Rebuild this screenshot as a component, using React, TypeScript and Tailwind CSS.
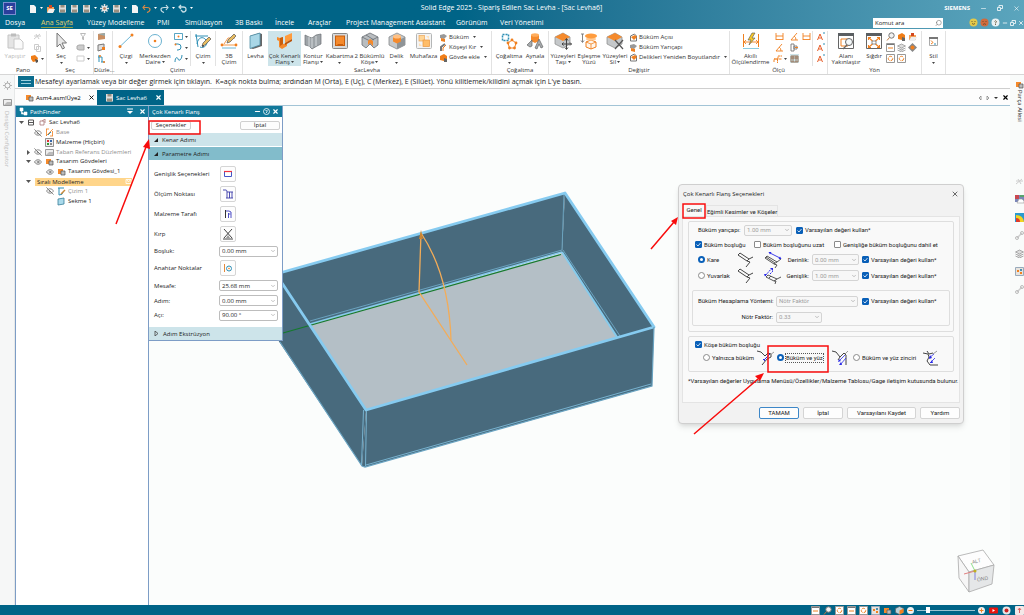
import type { ReactNode } from 'react'
import { ChevronDown, Eye, EyeOff, Minus, Search, X } from 'lucide-react'

interface SvgProps {
  children: ReactNode
  size?: number
}

// All small drawings share an outline-less box of size x size units
function Svg({ children, size = 18 }: SvgProps) {
  return (
    <svg width={size} height={size} viewBox={`0 0 ${size} ${size}`} fill="none" className="shrink-0" aria-hidden="true">
      {children}
    </svg>
  )
}

function Caret({ className = 'text-[#444]' }: { className?: string }) {
  return (
    <svg width="3" height="2" viewBox="0 0 3 2" className={`inline-block shrink-0 ${className}`} aria-hidden="true">
      <path d="M0 0h3L1.500 2z" fill="currentColor" />
    </svg>
  )
}

const OR = '#f08020'
const BL = '#2e8fb5'
const GR = '#8b8f92'

const big = {
  paste: (
    <Svg>
      <path d="M2 3h11v13H2z" fill="#e4e4e4" stroke="#c4c4c4" />
      <path d="M5 1.500h5v3H5z" fill="#bdbdbd" />
      <path d="M8 7h6l3 3v7H8z" fill="#fafafa" stroke="#c8c8c8" />
    </Svg>
  ),
  cursor: (
    <Svg>
      <path d="M5 1v14l3-3 2.500 5 2-1-2.500-5h4.500z" fill="#e8e8e8" stroke="#777" />
    </Svg>
  ),
  line: (
    <Svg>
      <path d="M3 14.500L15 3" stroke="#6cb6d6" />
      <circle cx="3" cy="14.500" r="1.500" fill={OR} />
      <circle cx="15" cy="3" r="1.500" fill={OR} />
    </Svg>
  ),
  circle: (
    <Svg>
      <circle cx="9" cy="9" r="6.500" stroke="#5aa9cb" strokeWidth=".9" />
      <circle cx="9" cy="9" r="1.300" fill={OR} />
    </Svg>
  ),
  sketch: (
    <Svg>
      <path d="M2 2l2 13M1 4h13M3 12C4 5 9 4 12 8s-2 9-6 7" stroke={BL} />
      <path d="M8 14l1-3 6-6 2 2-6 6z" fill="#e8bd62" stroke="#555" strokeWidth=".7" />
      <circle cx="9" cy="14" r="1" fill="#444" />
    </Svg>
  ),
  sketch3d: (
    <Svg>
      <path d="M2 13h14M4 12l4-6h7" stroke={OR} strokeWidth=".8" />
      <path d="M7 11l1-3 6-6 2 2-6 6z" fill="#e8bd62" stroke="#555" strokeWidth=".7" />
      <circle cx="2" cy="13" r="1.400" fill={OR} />
      <circle cx="16" cy="13" r="1.400" fill={OR} />
      <path d="M2 16h14" stroke="#6cb6d6" />
    </Svg>
  ),
  plate: (
    <Svg>
      <path d="M3 4l9-3 3 1v12l-9 3-3-1z" fill="#666" />
      <path d="M3 4l10-3v12L3 16.500z" fill="#a9d7e7" stroke="#4e8da4" strokeWidth=".8" />
    </Svg>
  ),
  flange: (
    <Svg>
      <path d="M1 5l3 1 3-1v7l4-1v3l-5 3-3-2V9L1 8z" fill="#f58a2c" />
      <path d="M7 5v7l-3 2V6z" fill="#c95e0c" />
      <path d="M9 4l7-3v6l-7 4z" fill="#ff9c3e" />
      <path d="M9 11l7-4v2l-7 4z" fill="#b9530a" />
    </Svg>
  ),
  contour: (
    <Svg>
      <path d="M1 3l4 2 3 1 4-3 5-1v10l-4 2-5 3-3-3-4-1z" fill="#9ea4a8" stroke="#6a6f73" strokeWidth=".7" />
      <path d="M5 5v10M8 6v10M12 4v10" stroke="#d5d9dc" />
    </Svg>
  ),
  emboss: (
    <Svg>
      <rect x="1.500" y="1.500" width="15" height="15" rx="1" fill="#d7d9da" stroke="#888" />
      <rect x="4.500" y="4" width="9" height="9.500" fill="#f58a2c" stroke="#c95e0c" />
      <path d="M5 14l2-2h5v2z" fill="#c95e0c" />
    </Svg>
  ),
  corner: (
    <Svg>
      <path d="M9 1l8 4v8l-4 3-4-4-4 4-4-3V5z" fill="#b9bdc0" stroke="#6a6f73" strokeWidth=".8" />
      <path d="M1 5l8 4 8-4M9 9v3M5 3l8 5" stroke="#6a6f73" strokeWidth=".8" />
      <path d="M7 9l2-2 3 2v5l-3-3-2 2z" fill="#f58a2c" />
    </Svg>
  ),
  hole: (
    <Svg>
      <path d="M9 1l8 4v8l-8 4-8-4V5z" fill="#c5c8ca" stroke="#85898c" strokeWidth=".8" />
      <path d="M9 9l8-4v8l-8 4z" fill="#8f9497" />
      <path d="M5 4.500v5l4 2 4-2v-5z" fill="#f58a2c" />
      <ellipse cx="9" cy="4.500" rx="4" ry="2" fill="#ffc184" />
    </Svg>
  ),
  housing: (
    <Svg>
      <rect x="1.500" y="1.500" width="15" height="15" rx="1" fill="#f4f4f4" stroke="#b4b6b7" />
      <rect x="4" y="3.500" width="5.500" height="5.500" fill="#ffd596" stroke="#eba75b" strokeWidth=".7" />
      <rect x="8" y="8" width="6.500" height="6.500" fill="#ffbd69" stroke="#e8953e" strokeWidth=".7" />
      <path d="M11 4h3v3M4 11v3h3" fill="#ffe0b8" />
    </Svg>
  ),
  pattern: (
    <Svg>
      <path d="M2.500 2.500h6v6h-6z" stroke={BL} strokeDasharray="2 1" strokeWidth="1.500" />
      <path d="M12 8l4 3-1.500 5h-5L8 11z" stroke={OR} />
      <g fill={OR}>
        <circle cx="12" cy="8" r="1.400" /><circle cx="16" cy="11" r="1.400" /><circle cx="14.500" cy="16" r="1.400" />
        <circle cx="9.500" cy="16" r="1.400" /><circle cx="8" cy="11" r="1.400" />
      </g>
    </Svg>
  ),
  mirror: (
    <Svg>
      <path d="M5 3h8v6l-4 2-4-2z" fill="#f58a2c" />
      <ellipse cx="9" cy="3" rx="4" ry="1.800" fill="#ffad5c" />
      <path d="M1 13l5-5v6l-2 1zM9 16l4-9 4 8-2 1-2-4-2 5z" fill="#a7abae" stroke="#666" strokeWidth=".7" />
    </Svg>
  ),
  moveFace: (
    <Svg>
      <path d="M1 5l8-4 7 4v7l-7 4-8-4z" fill="#c5c8ca" stroke="#888" strokeWidth=".7" />
      <path d="M1 5l8-4 7 4-7 4z" fill="#f58a2c" />
      <path d="M12.500 7v10M8 12h9.500M11 8.500l1.500-2 1.500 2M11 15.500l1.500 2 1.500-2M9.500 10.500L8 12l1.500 1.500M16 10.500l1.500 1.500-1.500 1.500" stroke="#444" />
    </Svg>
  ),
  matchFace: (
    <Svg>
      <path d="M6 10l5-2 5 2v5l-5 2-5-2z" fill="#fff6ec" stroke={OR} />
      <path d="M11 12v5M6 10l5 2 5-2" stroke={OR} strokeWidth=".8" />
      <path d="M2.500 2v8M1 8.500l1.500 2 1.500-2M1 2h3" stroke="#777" strokeWidth=".9" />
      <ellipse cx="11" cy="7" rx="5" ry="1.500" fill="#ffc993" />
      <ellipse cx="11" cy="4" rx="6" ry="2.500" fill="#ff9c3e" />
    </Svg>
  ),
  deleteFace: (
    <Svg>
      <path d="M1 5l8-4 7 4v7l-7 4-8-4z" fill="#c5c8ca" stroke="#888" strokeWidth=".7" />
      <path d="M1 5l8-4 7 4-7 4z" fill="#f58a2c" />
      <path d="M9 8l8 9M17 8l-8 9" stroke="#555" strokeWidth="1.200" />
    </Svg>
  ),
  smartDim: (
    <Svg>
      <path d="M1.500 2v13M16.500 2v13" stroke={OR} />
      <path d="M2 10h14M4 8l-2 2 2 2M14 8l2 2-2 2" stroke={OR} strokeWidth=".9" />
      <path d="M10 1L6 8h3l-2 5 6-7h-3l3-5z" fill="#f6c72c" stroke="#555" strokeWidth=".6" />
      <path d="M1 16.500h16" stroke="#8ccbe0" />
    </Svg>
  ),
  zoomArea: (
    <Svg>
      <path d="M1.500 1.500h15v15h-15z" fill="#fff" stroke="#666" />
      <path d="M1 1h16v3H1z" fill="#5b5f62" />
      <path d="M4 7h7v7H4z" stroke={OR} />
      <circle cx="12" cy="10" r="3.500" fill="#f4f8fa" stroke="#666" />
      <path d="M10 13l-4 4" stroke="#666" strokeWidth="1.300" />
    </Svg>
  ),
  fit: (
    <Svg>
      <path d="M1.500 1.500h15v15h-15z" fill="#fff" stroke="#666" />
      <path d="M1 1h16v3H1z" fill="#5b5f62" />
      <path d="M4 6l3.500 3M14 6l-3.500 3M4 15l3.500-3M14 15l-3.500-3M3.500 8V5.500H6M12 5.500h2.500V8M3.500 13v2.500H6M12 15.500h2.500V13" stroke={OR} strokeWidth="1.100" />
      <path d="M7 9h4v3H7z" stroke="#777" strokeWidth=".8" />
    </Svg>
  ),
}

const small = {
  cut: <Svg size={9}><path d="M1 7l6-5M3 2l3 5M1 4h7" stroke="#ccc" /></Svg>,
  copy: <Svg size={9}><path d="M1.500 1.500h4v5h-4zM3.500 3.500h4v5h-4z" fill="#fff" stroke="#ccc" /></Svg>,
  paint: <Svg size={9}><path d="M1 2l4-1 3 3-1 3-4 1-2-3z" fill="#f07d17" /><path d="M5 5l3 1v2L6 9z" fill="#555" /></Svg>,
  filter: <Svg size={9}><path d="M1.500 1.500h5L4.500 4.500V8l-1-1V4.500z" stroke="#bbb" /></Svg>,
  tag: <Svg size={9}><path d="M1 3l2-1h5v5H3L1 6z" fill="#ccc" stroke="#aaa" /></Svg>,
  box: <Svg size={9}><path d="M1 2h7v5H1z" stroke="#ccc" /></Svg>,
  planeA: <Svg size={9}><path d="M1 2l7-1v6l-7 1z" fill="#c98f63" /><path d="M1 2l7-1v3z" fill="#9aa" /></Svg>,
  planeB: <Svg size={9}><path d="M1 2l6-1v5l-6 2z" fill="#ddd" stroke="#777" /><path d="M5 4h3v3H5z" fill={OR} /></Svg>,
  axes: <Svg size={9}><path d="M2 1v7M1 3h4M4 8h4M5 3v5" stroke={BL} /><circle cx="3" cy="2" r="1" fill={OR} /><circle cx="7" cy="8" r="1" fill={OR} /></Svg>,
  rect: <Svg size={9}><path d="M.5 1.500h8v6h-8z" stroke={BL} strokeWidth=".8" /><circle cx="4.500" cy="4.500" r="1" fill={OR} /></Svg>,
  arc: <Svg size={9}><path d="M1 1h3a3 3 0 010 6H3" stroke={BL} /><circle cx="1.500" cy="1.500" r="1" fill={OR} /></Svg>,
  curve: <Svg size={9}><path d="M1 8c0-4 2-6 3-3s4 0 4-4" stroke={BL} /></Svg>,
  bend: <Svg size={9}><path d="M1 2l4-1 3 2-3 3-4-1z" fill="#999" /><path d="M2 5l4 1v3L2 8z" fill={OR} /></Svg>,
  chamfer: <Svg size={9}><path d="M2 8V4l4-3" stroke="#777" strokeWidth="2" /><path d="M4 8V5l3-3" stroke={OR} /></Svg>,
  body: <Svg size={9}><path d="M1 3l4-2 3 2v4L5 8 1 7z" fill="#f07d17" /><path d="M5 5l3 1v3H5z" fill="#666" /></Svg>,
  bendEdit: <Svg size={9}><path d="M1.500 8V3l4-2 2 2v5z" stroke="#777" /><path d="M2 4l4-2 2 2-3 3z" fill={OR} /></Svg>,
  dim: <Svg size={9}><path d="M1 1v7M8 1v7M1 4h7M1 7.500h7" stroke={OR} strokeWidth=".9" /></Svg>,
  angle: <Svg size={9}><path d="M1 8h7M1 8l6-7M4 4q2 1 2 4" stroke={OR} strokeWidth=".9" /></Svg>,
  dimBox: <Svg size={9}><path d="M1 1h3v7H1zM4 3h3v3H4z" stroke="#777" strokeWidth=".9" /><path d="M5 4.500h3" stroke={OR} /></Svg>,
  ordinate: <Svg size={9}><path d="M1 8V5h4V2h4M4.500 5v4M1 5h8" stroke={OR} strokeDasharray="2 .5" /></Svg>,
  dimOn: <Svg size={9}><path d="M0 0h9v9H0z" fill="#cde4ea" /><path d="M1 2h7v6H1zM1 4h7M3 2v6M6 2v6" stroke="#8b5b3a" strokeWidth=".8" /></Svg>,
  font: <Svg size={9}><path d="M1.500 8l2.500-6 2.500 6M2.500 6h3" stroke="#e8602c" /><path d="M7 1h2" stroke={BL} /></Svg>,
  zoomS: <Svg size={9}><circle cx="5.500" cy="3.500" r="2.700" fill="#f2f2f2" stroke="#777" /><path d="M3.500 5.500L1 8.500" stroke="#c07a40" /></Svg>,
  win: <Svg size={9}><path d="M.5.500h8v8h-8z" fill="#fff" stroke="#999" /><path d="M1 1h7v1H1z" fill="#777" /><path d="M2 5h5" stroke={OR} /></Svg>,
  rotate: <Svg size={9}><path d="M.5.500h8v8h-8z" fill="#fff" stroke="#999" /><circle cx="4.500" cy="4.500" r="2.200" stroke={OR} strokeDasharray="3 1" /></Svg>,
  target: <Svg size={9}><path d="M4.500 0L9 4.500 4.500 9 0 4.500z" fill="#888" /><circle cx="4.500" cy="4.500" r="2" fill={OR} /></Svg>,
  chain: <Svg size={9}><path d="M2 7l5-5" stroke="#ccc" strokeWidth="1.500" /><circle cx="2" cy="7" r="1.500" stroke="#bbb" /><circle cx="7" cy="2" r="1.500" stroke="#bbb" /></Svg>,
  doc: <Svg size={9}><path d="M2 1h4l2 2v6H2z" fill="#f4f4f4" /></Svg>,
  open: <Svg size={9}><path d="M1 3h7v5H1z" fill="#f2a35d" /><path d="M3 1h3v3H3z" fill="#d3471e" /><path d="M3 5h6L7 9H1z" fill="#eee" /></Svg>,
  save: <Svg size={9}><path d="M1 1h7v7.500H1z" fill="#ddd" /><path d="M2.500 1h4v2.500h-4zM2 5.500h5v3H2z" fill="#998f80" /></Svg>,
  gear: <Svg size={9}><path d="M4.500 0v9M0 4.500h9M1.500 1.500l6 6M7.500 1.500l-6 6" stroke="#e2e2e2" strokeWidth="1.500" /><circle cx="4.500" cy="4.500" r="2.500" fill="#e8e8e8" /><circle cx="4.500" cy="4.500" r="1.300" fill="#b07a5a" /></Svg>,
  gearGrey: <Svg size={9}><path d="M4.500 0v9M0 4.500h9M1.500 1.500l6 6M7.500 1.500l-6 6" stroke="#b5b5b5" /><circle cx="4.500" cy="4.500" r="2.500" fill="#f6f7f7" stroke="#aaa" /></Svg>,
  undo: <Svg size={9}><path d="M3 1L1 3.500 3 6M1 3.500h4q3 0 3 2t-3 3" stroke="#d98a45" strokeWidth="1.200" /></Svg>,
  redo: <Svg size={9}><path d="M6 1l2 2.500L6 6M8 3.500H4q-3 0-3 2t3 3" stroke="#c5dde5" strokeWidth="1.200" /></Svg>,
  history: <Svg size={9}><path d="M3 1L1 3l2 2M1 3h4q3 0 3 2.500T5 8l-2-2" stroke="#c5dde5" strokeWidth="1.300" /></Svg>,
  style: <Svg size={9}><path d="M.5.500h8v8h-8z" fill="#fff" stroke="#aaa" /><path d="M0 0h9v2H0z" fill="#777" /><path d="M2 3.500l2 2-2 1.500" stroke={OR} /><path d="M5 7h2" stroke={BL} /></Svg>,
  cube: <Svg size={9}><path d="M4.500.5l4 2v4l-4 2-4-2v-4z" fill="#bcd3dc" stroke="#666" strokeWidth=".7" /><path d="M4.500 4.500l4-2v4l-4 2z" fill={OR} /></Svg>,
  part: <Svg size={9}><path d="M1 2l6-1v6l-6 1z" fill="#aadaeb" stroke="#377f99" strokeWidth=".8" /></Svg>,
  asm: <Svg size={9}><path d="M1 2h5v5H1z" fill="#f58a2c" /><path d="M4 4h4v4H4z" fill="#bbb" stroke="#555" strokeWidth=".7" /></Svg>,
  material: <Svg size={9}><path d="M.5.500h8v8h-8z" fill="#eee" stroke="#777" strokeWidth=".8" /><path d="M2 2h2v2H2z" fill="#d33" /><path d="M5 2h2v2H5z" fill="#36a" /><path d="M2 5h2v2H2z" fill="#393" /><path d="M5 5h2v2H5z" fill="#888" /></Svg>,
  grid: <Svg size={9}><path d="M1 8L8 1M1 1h3M5 8h3M1.500 1v7M7.500 3v5" stroke={OR} strokeWidth=".8" /><path d="M3 7l3-3" stroke={BL} /></Svg>,
  sketch: <Svg size={9}><path d="M1 1h6M2 1v7q4 0 4-3" stroke={BL} /><path d="M4 7l4-4" stroke="#c98a3a" strokeWidth="1.500" /></Svg>,
  plane: <Svg size={9}><path d="M.5 1.500h8v6h-8z" fill="#eee" stroke="#999" /><path d="M1 7l3-3h4v3z" fill="#bbb" /></Svg>,
  layers: <Svg size={9}><path d="M4.500 1l4 2-4 2-4-2zM.5 5l4 2 4-2M.5 7l4 2 4-2" fill="#ddd" stroke="#999" strokeWidth=".8" /></Svg>,
  rainbow: <Svg size={9}><path d="M0 0h9v9H0z" fill="#2a9ad0" /><path d="M1 9V2q7 0 8 7z" fill="#f4d21f" /><path d="M1 9V5q4 0 4 4z" fill="#e03a2c" /></Svg>,
  image: <Svg size={9}><path d="M0 0h9v7H0z" fill="#7a86b8" /><path d="M0 0h4v4H0z" fill="#c9474f" /><path d="M5 0h4v2H5z" fill="#59a36b" /><path d="M2 8l2-4h3l2 2v2z" fill="#fff" stroke="#999" strokeWidth=".6" /></Svg>,
  swatch: <Svg size={9}><path d="M.5.500h8v8h-8z" fill="#e8e3dc" stroke="#9ab" /><path d="M2 3h2v2H2zM5 5h2v2H5z" fill={OR} /><path d="M5 2h2v2H5z" fill="#4a90b0" /></Svg>,
}

interface ToolProps {
  icon: ReactNode
  lines: string[]
  width: string
  caret?: boolean
  active?: boolean
  disabled?: boolean
}

function Tool({ icon, lines, width, caret, active, disabled }: ToolProps) {
  return (
    <button
      disabled={disabled}
      className={`flex h-[35px] shrink-0 flex-col items-center whitespace-nowrap leading-[6px] ${width} ${active ? 'bg-[#cde4ea]' : ''} ${disabled ? 'text-[#b8b8b8]' : ''}`}
    >
      <span className="mb-[2px] flex h-5 items-center">{icon}</span>
      {lines.map((line, i) => (
        <span key={line} className="flex items-center gap-px">
          {line}
          {caret && i > 0 && <Caret />}
        </span>
      ))}
      {caret && lines.length === 1 && <span className="mt-[3px] flex"><Caret /></span>}
    </button>
  )
}

function SmallTools({ icons, carets = [], width }: { icons: ReactNode[]; carets?: number[]; width: string }) {
  return (
    <div className={`flex shrink-0 flex-col ${width}`}>
      {icons.map((icon, i) => (
        <button key={i} className="flex h-[11px] items-center justify-center gap-[2px]">
          {icon}
          {carets.includes(i) && <Caret />}
        </button>
      ))}
    </div>
  )
}

function ToolList({ items }: { items: { icon: ReactNode; text: string; caret?: boolean }[] }) {
  return (
    <div className="flex flex-col pt-px">
      {items.map((item) => (
        <button key={item.text} className="flex h-[10px] items-center gap-px whitespace-nowrap">
          {item.icon}
          {item.text}
          {item.caret && <span className="ml-[3px] flex"><Caret /></span>}
        </button>
      ))}
    </div>
  )
}

function Group({ label, width, children }: { label: string; width: string; children: ReactNode }) {
  return (
    <section className={`flex shrink-0 flex-col border-r border-[#e2e2e2] ${width}`}>
      <div className="flex h-[36px]">{children}</div>
      <div className="text-center leading-[8px]">{label}</div>
    </section>
  )
}

function Ribbon() {
  return (
    <div className="flex h-[46px] overflow-hidden border-b border-[#d6d6d6] bg-white pt-[2px] text-[#333]">
      <Group label="Pano" width="w-[47px]">
        <Tool icon={big.paste} lines={['Yapıştır']} width="w-[30px]" disabled />
        <SmallTools icons={[small.cut, small.copy, small.paint]} carets={[2]} width="w-[14px]" />
      </Group>
      <Group label="Seç" width="w-[47px]">
        <Tool icon={big.cursor} lines={['Seç']} width="w-[28px]" caret />
        <SmallTools icons={[small.filter, small.tag, small.box]} carets={[1, 2]} width="w-[16px]" />
      </Group>
      <Group label="Düzle..." width="w-[19px]">
        <SmallTools icons={[small.planeA, small.planeB, small.axes]} width="w-[14px]" />
      </Group>
      <Group label="Çizim" width="w-[130px]">
        <Tool icon={big.line} lines={['Çizgi']} width="w-[26px]" caret />
        <Tool icon={big.circle} lines={['Merkezden', 'Daire']} width="w-[32px]" caret />
        <SmallTools icons={[small.rect, small.arc, small.curve]} carets={[0, 1, 2]} width="w-[19px]" />
        <div className="flex border-x border-[#e2e2e2]">
          <Tool icon={big.sketch} lines={['Çizim']} width="w-[24px]" caret />
        </div>
        <Tool icon={big.sketch3d} lines={['3B', 'Çizim']} width="w-[26px]" />
      </Group>
      <Group label="SacLevha" width="w-[249px]">
        <Tool icon={big.plate} lines={['Levha']} width="w-[25px]" />
        <Tool icon={big.flange} lines={['Çok Kenarlı', 'Flanş']} width="w-[33px]" caret active />
        <Tool icon={big.contour} lines={['Kontur', 'Flanşı']} width="w-[24px]" caret />
        <Tool icon={big.emboss} lines={['Kabartma']} width="w-[29px]" caret />
        <Tool icon={big.corner} lines={['2 Bükümlü', 'Köşe']} width="w-[31px]" caret />
        <Tool icon={big.hole} lines={['Delik']} width="w-[23px]" caret />
        <Tool icon={big.housing} lines={['Muhafaza']} width="w-[31px]" />
        <ToolList
          items={[
            { icon: small.bend, text: 'Büküm', caret: true },
            { icon: small.chamfer, text: 'Köşeyi Kır', caret: true },
            { icon: small.body, text: 'Gövde ekle', caret: true },
          ]}
        />
      </Group>
      <Group label="Çoğaltma" width="w-[57px]">
        <Tool icon={big.pattern} lines={['Çoğaltma']} width="w-[34px]" caret />
        <Tool icon={big.mirror} lines={['Aynala']} width="w-[18px]" caret />
      </Group>
      <Group label="Değiştir" width="w-[181px]">
        <Tool icon={big.moveFace} lines={['Yüzeyleri', 'Taşı']} width="w-[28px]" caret />
        <Tool icon={big.matchFace} lines={['Eşleşme', 'Yüzü']} width="w-[24px]" />
        <Tool icon={big.deleteFace} lines={['Yüzeyleri', 'Sil']} width="w-[28px]" caret />
        <ToolList
          items={[
            { icon: small.bendEdit, text: 'Büküm Açısı' },
            { icon: small.bend, text: 'Büküm Yarıçapı' },
            { icon: small.bendEdit, text: 'Delikleri Yeniden Boyutlandır', caret: true },
          ]}
        />
      </Group>
      <Group label="Ölçü" width="w-[98px]">
        <Tool icon={big.smartDim} lines={['Akıllı', 'Ölçülendirme']} width="w-[41px]" />
        <SmallTools icons={[small.dim, small.angle, small.ordinate]} carets={[2]} width="w-[17px]" />
        <SmallTools icons={[small.angle, small.dimBox, small.dimOn]} width="w-[12px]" />
        <SmallTools icons={[small.dim]} width="w-[12px]" />
        <div className="flex border-l border-[#e2e2e2]">
          <SmallTools icons={[small.font, small.font, small.font]} width="w-[14px]" />
        </div>
      </Group>
      <Group label="Yön" width="w-[94px]">
        <Tool icon={big.zoomArea} lines={['Alanı', 'Yakınlaştır']} width="w-[36px]" />
        <Tool icon={big.fit} lines={['Sığdır']} width="w-[20px]" />
        <SmallTools icons={[small.zoomS, small.win, small.rotate]} width="w-[12px]" />
        <SmallTools icons={[small.body, small.layers, small.rotate]} width="w-[11px]" />
        <SmallTools icons={[small.open, small.target]} width="w-[11px]" />
      </Group>
      <section className="w-[24px] border-r border-[#e2e2e2]">
        <Tool icon={small.style} lines={['Stil']} width="w-full" caret />
      </section>
    </div>
  )
}

const tabs = [
  ['Dosya', 'w-[36px]'],
  ['Ana Sayfa', 'w-[46px]'],
  ['Yüzey Modelleme', 'w-[70px]'],
  ['PMI', 'w-[28px]'],
  ['Simülasyon', 'w-[50px]'],
  ['3B Baskı', 'w-[40px]'],
  ['İncele', 'w-[33px]'],
  ['Araçlar', 'w-[38px]'],
  ['Project Management Assistant', 'w-[110px]'],
  ['Görünüm', 'w-[44px]'],
  ['Veri Yönetimi', 'w-[50px]'],
]

function Restore() {
  return (
    <Svg size={6}>
      <path d="M.5 2.500h3v3h-3zM2 2V.5h3.500v3H4" stroke="currentColor" strokeWidth=".8" />
    </Svg>
  )
}

function Face({ fill, mouth, label }: { fill: string; mouth: string; label: string }) {
  return (
    <button aria-label={label} className="flex">
      <Svg size={9}>
        <circle cx="4.500" cy="4.500" r="4" fill={fill} />
        <path d={mouth} stroke="#5c4a2a" strokeWidth=".8" />
      </Svg>
    </button>
  )
}

function Header() {
  return (
    <header className="flex h-[29px] flex-col bg-linear-to-r from-[#006487] from-45% to-[#5ba5bd] text-white">
      <div className="grid h-[16px] grid-cols-[1fr_auto_1fr] items-center pl-[3px] pr-1">
        <div className="flex items-center">
          <span className="mr-[12px] flex h-[13px] w-[13px] items-center justify-center border border-[#7a8fd0] bg-[#2a3f9c] font-bold leading-none">SE</span>
          <div className="flex items-center gap-[3px] text-[#d8e8ee]">
            {small.doc}
            <Caret className="text-white" />
            {small.open}
            {small.save}
            {small.save}
            {small.save}
            <Caret className="text-white" />
            {small.gear}
            {small.save}
            <Caret className="text-white" />
            {small.doc}
            {small.undo}
            <Caret className="text-white" />
            {small.redo}
            <Caret className="text-white" />
            {small.history}
            <Caret className="text-white" />
          </div>
        </div>
        <h1 className="whitespace-nowrap text-[7px]">Solid Edge 2025 - Sipariş Edilen Sac Levha - [Sac Levha6]</h1>
        <div className="flex items-center justify-end gap-[10px]">
          <b>SIEMENS</b>
          <button aria-label="Simge durumuna küçült"><Minus size={7} /></button>
          <button aria-label="Geri yükle"><Restore /></button>
          <button aria-label="Kapat"><X size={7} /></button>
        </div>
      </div>
      <div className="flex flex-1 items-center pl-[5px]">
        <nav className="flex h-full flex-1 items-center whitespace-nowrap text-[7px]">
          {tabs.map(([name, width]) => (
            <button
              key={name}
              className={`h-full shrink-0 text-left ${width} ${name === 'Ana Sayfa' ? 'text-[#e3d06a] underline decoration-[#8a9c45] underline-offset-2' : ''}`}
            >
              {name}
            </button>
          ))}
        </nav>
        <label className="mr-[26px] flex h-[10px] w-[70px] items-center bg-white pr-px text-[#222]">
          <input aria-label="Komut ara" placeholder="Komut ara" className="w-full min-w-0 pl-[2px] outline-none placeholder:text-[#222]" />
          <Search size={8} className="-scale-x-100 text-[#777]" />
        </label>
        <div className="flex items-center gap-[2px]">
          <Face label="Beğendim" fill="#e3c94a" mouth="M3 5.500q1.500 1.500 3 0M3 3v1M6 3v1" />
          <Face label="Beğenmedim" fill="#d06a3c" mouth="M3 6.500q1.500-1.500 3 0M3 3v1M6 3v1" />
          <Face label="Yardım" fill="#e9f1f4" mouth="M3.500 3.500q1-1.500 2 0L4.500 5v.5M4.500 6v1" />
          <button aria-label="Belgeyi küçült"><Minus size={6} strokeWidth={3} /></button>
          <button aria-label="Belgeyi geri yükle"><Restore /></button>
          <button aria-label="Belgeyi kapat"><X size={6} strokeWidth={3} /></button>
        </div>
      </div>
    </header>
  )
}

interface TreeRow {
  text: string
  indent: string
  arrow?: 'open' | 'closed'
  eye?: ReactNode
  icon?: ReactNode
  dim?: boolean
}

const hidden = <EyeOff size={8} />
const shown = <Eye size={8} />

const tree: TreeRow[] = [
  { text: 'Sac Levha6', indent: 'pl-px', arrow: 'open', eye: <Svg size={7}><path d="M.5 1h5v5h-5zM1 3.500h4" stroke="#555" /></Svg>, icon: <Svg size={7}><path d="M1 2h4v4H1zM3 2l3-2v4" stroke="#a77" strokeWidth=".8" /></Svg> },
  { text: 'Base', indent: 'pl-2', eye: hidden, icon: small.grid, dim: true },
  { text: 'Malzeme (Hiçbiri)', indent: 'pl-2', icon: small.material },
  { text: 'Taban Referans Düzlemleri', indent: 'pl-2', arrow: 'closed', eye: hidden, icon: small.plane, dim: true },
  { text: 'Tasarım Gövdeleri', indent: 'pl-2', arrow: 'open', eye: shown, icon: small.asm },
  { text: 'Tasarım Gövdesi_1', indent: 'pl-5', eye: shown, icon: small.asm },
  { text: 'Sıralı Modelleme', indent: 'pl-2', arrow: 'open' },
  { text: 'Çizim 1', indent: 'pl-5', eye: hidden, icon: small.sketch, dim: true },
  { text: 'Sekme 1', indent: 'pl-5', icon: small.part },
]

function TreeArrow({ state }: { state?: 'open' | 'closed' }) {
  return (
    <span className="flex w-2 justify-center">
      <Svg size={5}>
        {state === 'open' && <path d="M0 1h5L2.500 4z" fill="#555" />}
        {state === 'closed' && <path d="M1 0l3 2.500L1 5z" fill="#555" />}
      </Svg>
    </span>
  )
}

function PathFinder() {
  return (
    <aside className="flex w-[134px] shrink-0 flex-col border-x border-[#7d9dc6] bg-white">
      <div className="flex h-[11px] items-center bg-[#11789a] pl-[3px] pr-[2px] text-white">
        <Svg size={9}><path d="M1 1h3v3H1zM5 5h3v3H5zM2.500 4v3H5" fill="#fff" stroke="#fff" strokeWidth=".6" /></Svg>
        <span className="ml-[2px] flex-1">PathFinder</span>
        <button aria-label="Seçenekler" className="mr-[5px] flex"><Svg size={7}><path d="M0 1h6" stroke="#fff" /><path d="M0 3h6L3 6z" fill="#fff" /></Svg></button>
        <button aria-label="Kapat"><X size={7} strokeWidth={4} /></button>
      </div>
      <ul className="mt-px grid h-[88px] auto-rows-fr">
        {tree.map((row) => (
          <li key={row.text} className={`flex items-center gap-px whitespace-nowrap ${row.indent} ${row.dim ? 'text-[#8f8f8f]' : 'text-[#222]'}`}>
            <TreeArrow state={row.arrow} />
            {row.text === 'Sıralı Modelleme' ? (
              <span className="ml-[2px] mr-4 flex h-[8px] flex-1 items-center justify-between bg-[#ffd58a] pl-[2px] leading-[8px]">
                {row.text}
                <Svg size={7}><path d="M1 1.500h5v4H1zM2 2l1.500 2L6 1" stroke="#fff" strokeWidth=".8" /></Svg>
              </span>
            ) : (
              <>
                <span className="flex w-[10px] justify-center text-[#555]">{row.eye}</span>
                <span className="flex w-[10px] justify-center">{row.icon}</span>
                <span className="pl-px leading-[9px]">{row.text}</span>
              </>
            )}
          </li>
        ))}
      </ul>
    </aside>
  )
}

function PanelRow({ label, children, height }: { label: string; children: ReactNode; height: string }) {
  return (
    <label className={`flex items-center ${height}`}>
      <span className="w-[65px] whitespace-nowrap">{label}</span>
      {children}
    </label>
  )
}

function IconButton({ label, children }: { label: string; children: ReactNode }) {
  return (
    <button aria-label={label} className="ml-px flex h-4 w-4 items-center justify-center rounded-xs border border-[#d5d5d5] bg-[#fdfdfd]">
      {children}
    </button>
  )
}

interface ComboProps {
  value: string
  width: string
  label?: string
  disabled?: boolean
}

function Combo({ value, width, label, disabled }: ComboProps) {
  return (
    <span className={`relative flex h-[11px] shrink-0 items-center ${width}`}>
      <select
        aria-label={label}
        disabled={disabled}
        className={`h-full w-full appearance-none rounded-xs border pl-[2px] leading-none ${disabled ? 'border-[#d4d4d4] bg-[#f7f7f7] text-[#a0a0a0]' : 'border-[#bdbdbd] bg-white text-[#222]'}`}
      >
        <option>{value}</option>
      </select>
      <ChevronDown size={6} className="pointer-events-none absolute right-[2px] text-[#888]" />
    </span>
  )
}

function CommandPanel() {
  return (
    <div className="absolute left-0 top-0 w-[134px] border-r border-b border-[#7d9dc6] bg-white text-[#222]">
      <div className="flex h-[11px] items-center bg-[#11789a] pl-[3px] pr-[3px] text-white">
        <span className="flex-1">Çok Kenarlı Flanş</span>
        <button aria-label="Küçült" className="mr-[2px]"><Minus size={7} strokeWidth={4} /></button>
        <button aria-label="Yardım" className="mr-[2px] flex"><Svg size={7}><circle cx="3.500" cy="3.500" r="3" stroke="#fff" strokeWidth=".8" /><path d="M2.500 3q1-2 2 0l-1 1v1" stroke="#fff" strokeWidth=".8" /></Svg></button>
        <button aria-label="Kapat"><X size={7} strokeWidth={4} /></button>
      </div>
      <div className="flex h-[16px] items-center justify-between px-[2px] pb-px pt-[2px]">
        <button className="h-[9px] w-[40px] rounded-xs border border-[#d0d0d0] bg-[#fdfdfd] leading-[7px]">Seçenekler</button>
        <button className="h-[9px] w-[40px] rounded-xs border border-[#d0d0d0] bg-[#fdfdfd] leading-[7px]">İptal</button>
      </div>
      <button className="flex h-[13px] w-full items-center gap-1 bg-[#cde4ea] pl-[5px]">
        <Svg size={4}><path d="M4 0v4H0z" fill="#222" /></Svg>
        Kenar Adımı
      </button>
      <button className="mt-px flex h-[13px] w-full items-center gap-1 bg-[#82bccb] pl-[5px]">
        <Svg size={4}><path d="M4 0v4H0z" fill="#222" /></Svg>
        Parametre Adımı
      </button>
      <div className="pb-[5px] pl-[5px] pt-1">
        <PanelRow label="Genişlik Seçenekleri" height="h-5">
          <IconButton label="Genişlik Seçenekleri"><Svg size={10}><path d="M1.500 2.500v5h7v-5" stroke="#4455c8" /><path d="M1 2.500h8" stroke="#ee3344" strokeWidth="1.200" /></Svg></IconButton>
        </PanelRow>
        <PanelRow label="Ölçüm Noktası" height="h-5">
          <IconButton label="Ölçüm Noktası"><Svg size={10}><path d="M0 1h3q1 0 1 2v6M6.500 3v6M9 3v6M4 3h6M3 9h7" stroke="#3a3aa8" strokeWidth=".9" /></Svg></IconButton>
        </PanelRow>
        <PanelRow label="Malzeme Tarafı" height="h-5">
          <IconButton label="Malzeme Tarafı"><Svg size={10}><path d="M2.500 1v8" stroke="#333" /><path d="M3 2h3l2 1v6M5.500 4v5M5.500 5h2" stroke="#3a3ac0" strokeWidth=".9" /></Svg></IconButton>
        </PanelRow>
        <PanelRow label="Kırp" height="h-5">
          <IconButton label="Kırp"><Svg size={12}><path d="M1 11h10M2 10L10 1M10 10L2 1" stroke="#444" /><path d="M4 10l2-3 2 3z" fill="#999" /></Svg></IconButton>
        </PanelRow>
        <PanelRow label="Boşluk:" height="h-[14px]"><Combo value="0.00 mm" width="w-[59px]" /></PanelRow>
        <PanelRow label="Anahtar Noktalar" height="h-5">
          <IconButton label="Anahtar Noktalar"><Svg size={10}><path d="M1.500 1v8" stroke="#e58a3a" /><circle cx="6" cy="5.500" r="2.500" stroke={BL} /><circle cx="6" cy="5.500" r=".8" fill={OR} /></Svg></IconButton>
        </PanelRow>
        <PanelRow label="Mesafe:" height="h-[15px]"><Combo value="25.68 mm" width="w-[59px]" /></PanelRow>
        <PanelRow label="Adım:" height="h-[15px]"><Combo value="0.00 mm" width="w-[59px]" /></PanelRow>
        <PanelRow label="Açı:" height="h-[14px]"><Combo value="90.00 °" width="w-[59px]" /></PanelRow>
      </div>
      <button className="flex h-[13px] w-full items-center gap-1 bg-[#cde4ea] pl-[5px]">
        <Svg size={5}><path d="M1 0l3 2.500L1 5z" stroke="#444" strokeWidth=".8" /></Svg>
        Adım Ekstrüzyon
      </button>
    </div>
  )
}

function Model() {
  return (
    <svg className="absolute left-0 top-0 h-[499px] w-[861px]" viewBox="149 106 861 499" fill="none" aria-hidden="true">
      <path d="M270 276L565 193L562 252L310 325L270 290z" fill="#486a7d" />
      <path d="M565 193L654 327L618 338L562 252z" fill="#486a7d" />
      <path d="M310 324L562 253L618 338L366 410z" fill="#b4bfc6" />
      <path d="M276 275L310 325L366 410L362 466L276 337z" fill="#486a7d" />
      <path d="M366 410L654 327L652 386L365 467L362 466z" fill="#486a7d" />
      {/* bend lines along the floor */}
      <path d="M310 321L562 250" stroke="#6ba3bf" />
      <path d="M310 324L562 252" stroke="#86cbec" strokeWidth="1.500" />
      <path d="M562 252L617 337" stroke="#86cbec" strokeWidth="2" />
      <path d="M563 250L620 336M564 193L562 250" stroke="#6ba3bf" />
      <path d="M283 333L561 254.500" stroke="#147a2c" strokeWidth="1.200" />
      {/* rim */}
      <path d="M276 274L565 193L654 327L366 410L280 280" stroke="#86cbf0" strokeWidth="2.800" strokeLinejoin="round" />
      <path d="M280 342L362 466L365 467L652 386L654 327" stroke="#6aa4c2" strokeWidth="1.200" />
      <path d="M363.500 410L361.500 465M366.500 411L365.500 466M366 465L651 384" stroke="#77b2cf" />
      {/* flange handle */}
      <path d="M421 233L419 292L467 365M421 233Q449 275 451 340" stroke="#f3ac58" strokeWidth="1.300" />
      <path d="M421 230l2 9h-4z" fill="#c98532" />
    </svg>
  )
}

function ViewCube() {
  return (
    <svg className="absolute bottom-[11px] right-[14px] h-[46px] w-[40px]" viewBox="0 0 40 46" aria-hidden="true">
      <path d="M2 8L27 2L38 17L13 24z" fill="#fdfdfd" stroke="#a9a9a9" strokeWidth=".8" />
      <path d="M2 8L13 24V44L3 30z" fill="#f6f6f6" stroke="#a9a9a9" strokeWidth=".8" />
      <path d="M13 24L38 17L36 36L13 44z" fill="#e5e7e8" stroke="#a9a9a9" strokeWidth=".8" />
      <path d="M19 23L15 15" stroke="#8fe08f" />
      <path d="M19 23L8 26" stroke="#e08080" />
      <path d="M19 23v9" stroke="#8080dd" />
      <circle cx="19" cy="23" r="1.500" fill="#c0b020" />
      <text x="16" y="15" fontSize="5" fill="#777" transform="rotate(-12 20 13)">ALT</text>
      <text x="21" y="33" fontSize="5" fill="#777" transform="rotate(-8 24 32)">ÖND</text>
    </svg>
  )
}

interface MarkProps {
  type: 'checkbox' | 'radio'
  label: string
  name?: string
  checked?: boolean
  focus?: boolean
}

function Mark({ type, label, name, checked, focus }: MarkProps) {
  const look = type === 'radio' ? 'rounded-full checked:border-2' : 'rounded-[1px] checked:bg-[#0a60b8]'
  return (
    <label className="flex shrink-0 items-center gap-[2px] whitespace-nowrap">
      <span className="grid shrink-0 place-items-center">
        <input
          type={type}
          name={name}
          defaultChecked={checked}
          className={`peer col-start-1 row-start-1 h-[7px] w-[7px] appearance-none border border-[#8a8a8a] bg-white checked:border-[#0a60b8] ${look}`}
        />
        {type === 'checkbox' && (
          <svg width="5" height="5" viewBox="0 0 5 5" fill="none" className="pointer-events-none invisible z-10 col-start-1 row-start-1 peer-checked:visible" aria-hidden="true">
            <path d="M.5 2.500L2 4l2.500-3" stroke="#fff" strokeWidth=".8" />
          </svg>
        )}
      </span>
      <span className={focus ? 'outline-1 outline-dotted outline-[#555]' : ''}>{label}</span>
    </label>
  )
}

// Sheet profile sketches next to the relief options
function Relief({ kind }: { kind: 'plain' | 'deep' | 'wide' | 'corner' | 'face' | 'chain' }) {
  const blue = '#2a2ae8'
  return (
    <svg width="18" height="16" viewBox="0 0 18 16" fill="none" className="shrink-0" aria-hidden="true">
      {kind === 'plain' && <path d="M3 1l9 6 4-2M3 1L1 3l9 6M12 7l-2 2M10 9l3 1-4 5" stroke="#444" />}
      {kind === 'deep' && (
        <>
          <path d="M3 4l10 6 4-3M3 4L1 6l9 6 3-2M2 5l9 6M10 12l3 1-2 3" stroke="#444" strokeWidth=".9" />
          <path d="M6 1l10 5" stroke={blue} strokeWidth=".9" />
          <path d="M4.500 0l3 0-1.500 2.500zM17.500 7l-3 0 1.500-2.500z" fill={blue} />
        </>
      )}
      {kind === 'wide' && (
        <>
          <path d="M4 7l9 4 4-2M4 7L2 9l8 4 3-2M10 13l2 0-1 3M7 8l-2 2" stroke="#444" strokeWidth=".9" />
          <path d="M1 8l7-8M6 6l3-3" stroke={blue} strokeDasharray="2 1" />
          <path d="M0 6h3L1 8.500zM6 0h3v3z" fill={blue} />
        </>
      )}
      {kind === 'corner' && (
        <>
          <path d="M1 1l4 1 4 4 3-3 3 1v3l-4 2-5 6" stroke="#444" />
          <path d="M8 10l6-6M7 9l2 2" stroke={blue} />
          <path d="M14 5l4-3" stroke="#999" />
        </>
      )}
      {kind === 'face' && (
        <>
          <path d="M1 1l4 1 4 5 4-4 2 2v10M9 7l-2 3" stroke="#444" />
          <path d="M8 11l6-6M9 15l6-7" stroke={blue} strokeWidth=".8" />
          <path d="M8 9l2 2-3 1zM10 12l1 3-3 0z" fill={blue} />
          <path d="M14 4l3-3" stroke="#999" />
        </>
      )}
      {kind === 'chain' && (
        <>
          <path d="M1 3l5 1 1 3-2 4 3 4 8 0M5 1l2 3 4-1" stroke="#444" />
          <path d="M7 8l5-4M8 13l5-5" stroke={blue} strokeWidth=".8" />
          <path d="M8 5l2 3-3 1zM10 10l1 3-3 0z" fill={blue} />
          <path d="M11 4l4-3" stroke="#999" />
        </>
      )}
    </svg>
  )
}

function OptionsDialog() {
  const defaultLabel = 'Varsayılan değeri kullan*'
  const dialogButton = 'h-[12px] rounded-xs border bg-[#fdfdfd] leading-[10px]'
  return (
    <div
      role="dialog"
      aria-label="Çok Kenarlı Flanş Seçenekleri"
      className="absolute left-[529px] top-[78px] w-[286px] rounded border border-[#cfcfcf] bg-[#f2f2f2] px-[3px] font-['Roboto','Liberation_Sans',sans-serif] text-[#222] shadow-md"
    >
      <div className="flex h-[18px] items-center justify-between pl-px font-['Open_Sans',sans-serif]">
        <span>Çok Kenarlı Flanş Seçenekleri</span>
        <button aria-label="Kapat" className="mr-px"><X size={8} strokeWidth={2} /></button>
      </div>
      <div role="tablist" className="flex h-[13px] items-end">
        <button role="tab" aria-selected="true" className="h-[13px] w-[24px] bg-[#f9f9f9] leading-[13px]">Genel</button>
        <button role="tab" className="h-[11px] w-[72px] whitespace-nowrap border border-b-0 border-[#e4e4e4] leading-[9px]">Eğimli Kesimler ve Köşeler</button>
      </div>
      <div className="h-[187px] border border-[#e4e4e4] bg-[#f9f9f9] px-[5px] pt-[4px]">
        <div className="rounded-xs border border-[#dedede] px-[3px] pb-[5px]">
          <div className="flex h-[16px] items-center">
            <span className="w-[52px] whitespace-nowrap pl-[6px]">Büküm yarıçapı:</span>
            <Combo label="Büküm yarıçapı" value="1.00 mm" width="w-[48px]" disabled />
            <span className="ml-1 flex"><Mark type="checkbox" label={defaultLabel} checked /></span>
          </div>
          <div className="flex h-[13px] items-center pl-[3px]">
            <div className="w-[59px]"><Mark type="checkbox" label="Büküm boşluğu" checked /></div>
            <div className="w-[80px]"><Mark type="checkbox" label="Büküm boşluğunu uzat" /></div>
            <Mark type="checkbox" label="Genişliğe büküm boşluğunu dahil et" />
          </div>
          <div className="flex h-[17px] items-center pl-[6px]">
            <div className="w-[39px]"><Mark type="radio" name="relief" label="Kare" checked /></div>
            <div className="w-[27px]"><Relief kind="plain" /></div>
            <Relief kind="deep" />
            <span className="w-[30px] pr-[3px] text-right">Derinlik:</span>
            <Combo label="Derinlik" value="0.00 mm" width="w-[47px]" disabled />
            <span className="ml-[3px] flex"><Mark type="checkbox" label={defaultLabel} checked /></span>
          </div>
          <div className="flex h-[15px] items-center pl-[6px]">
            <div className="w-[39px]"><Mark type="radio" name="relief" label="Yuvarlak" /></div>
            <div className="w-[27px]"><Relief kind="plain" /></div>
            <Relief kind="wide" />
            <span className="w-[30px] pr-[3px] text-right">Genişlik:</span>
            <Combo label="Genişlik" value="1.00 mm" width="w-[47px]" disabled />
            <span className="ml-[3px] flex"><Mark type="checkbox" label={defaultLabel} checked /></span>
          </div>
          <div className="mt-[7px] h-[36px] rounded-xs border border-[#dedede] pt-[3px]">
            <div className="flex h-[14px] items-center">
              <span className="w-[83px] whitespace-nowrap pl-[5px]">Büküm Hesaplama Yöntemi:</span>
              <Combo label="Büküm Hesaplama Yöntemi" value="Nötr Faktör" width="w-[82px]" disabled />
              <span className="ml-1 flex"><Mark type="checkbox" label={defaultLabel} checked /></span>
            </div>
            <div className="mt-[2px] flex h-[14px] items-center">
              <span className="w-[83px] pr-[3px] text-right">Nötr Faktör:</span>
              <Combo label="Nötr Faktör" value="0.33" width="w-[46px]" disabled />
            </div>
          </div>
        </div>
        <div className="mt-1 h-[36px] rounded-xs border border-[#dedede] pl-[6px] pt-[3px]">
          <div className="flex h-[9px] items-center"><Mark type="checkbox" label="Köşe büküm boşluğu" checked /></div>
          <div className="flex h-[17px] items-center pl-[8px]">
            <div className="w-[53px]"><Mark type="radio" name="corner" label="Yalnızca büküm" /></div>
            <div className="w-[21px]"><Relief kind="corner" /></div>
            <div className="w-[54px]"><Mark type="radio" name="corner" label="Büküm ve yüz" checked focus /></div>
            <div className="w-[22px]"><Relief kind="face" /></div>
            <div className="w-[69px]"><Mark type="radio" name="corner" label="Büküm ve yüz zinciri" /></div>
            <Relief kind="chain" />
          </div>
        </div>
        <p className="mt-1 whitespace-nowrap leading-[9px]">
          *Varsayılan değerler Uygulama Menüsü/Özellikler/Malzeme Tablosu/Gage iletişim kutusunda bulunur.
        </p>
      </div>
      <div className="flex h-[20px] items-center justify-end gap-1">
        <button className={`${dialogButton} w-[40px] border-[#3d87c8]`}>TAMAM</button>
        <button className={`${dialogButton} w-[40px] border-[#d4d4d4]`}>İptal</button>
        <button className={`${dialogButton} w-[69px] border-[#d4d4d4]`}>Varsayılanı Kaydet</button>
        <button className={`${dialogButton} w-[40px] border-[#d4d4d4]`}>Yardım</button>
      </div>
    </div>
  )
}

function DocumentTabs() {
  return (
    <div className="flex h-[17px] items-end border-b border-[#a2c4d6] bg-[#fdfdfd]">
      <div className="flex h-[15px] w-[82px] items-center pl-[10px]">
        {small.asm}
        <button className="ml-[2px] flex-1 text-left">Asm4.asm!Üye2</button>
        <button aria-label="Sekmeyi kapat" className="mr-[2px]"><X size={7} strokeWidth={3} /></button>
      </div>
      <div className="flex h-[15px] w-[67px] items-center bg-[#006487] pl-[8px] text-white">
        {small.save}
        <button className="ml-[2px] flex-1 text-left">Sac Levha6</button>
        <button aria-label="Sekmeyi kapat" className="mr-[2px]"><X size={7} strokeWidth={4} /></button>
      </div>
      <div className="ml-auto flex h-[15px] items-center gap-1 pr-px">
        <button aria-label="Önceki"><Svg size={4}><path d="M3 0L1 2l2 2z" stroke="#777" strokeWidth=".7" /></Svg></button>
        <button aria-label="Sonraki"><Svg size={4}><path d="M1 0l2 2-2 2z" stroke="#777" strokeWidth=".7" /></Svg></button>
        <Svg size={4}><path d="M0 1h4L2 3z" fill="#333" /></Svg>
        <button aria-label="Kapat"><X size={7} strokeWidth={4} /></button>
      </div>
    </div>
  )
}

function StatusBar() {
  const icons = [small.win, small.zoomS, small.rotate, small.win, small.rotate, small.swatch, small.asm, small.cube]
  return (
    <footer className="flex h-[10px] items-center justify-end gap-[3px] bg-[#006487]">
      {icons.map((icon, i) => (
        <button key={i} className="flex">{icon}</button>
      ))}
      <button aria-label="Uzaklaştır" className="flex"><Svg size={7}><circle cx="3.500" cy="3.500" r="3.500" fill="#f0f0f0" /><path d="M1.500 3.500h4" stroke={OR} /></Svg></button>
      <input
        type="range"
        aria-label="Yakınlaştırma"
        defaultValue={16}
        className="h-[8px] w-[58px] appearance-none bg-transparent [&::-webkit-slider-runnable-track]:h-px [&::-webkit-slider-runnable-track]:bg-[#9cc3d0] [&::-webkit-slider-thumb]:-mt-[3px] [&::-webkit-slider-thumb]:h-[6px] [&::-webkit-slider-thumb]:w-1 [&::-webkit-slider-thumb]:appearance-none [&::-webkit-slider-thumb]:bg-white"
      />
      <button aria-label="Yakınlaştır" className="flex"><Svg size={7}><circle cx="3.500" cy="3.500" r="3.500" fill="#f0f0f0" /><path d="M1.500 3.500h4M3.500 1.500v4" stroke={OR} /></Svg></button>
      <button aria-label="Video" className="ml-px flex"><Svg size={9}><rect y="1.500" width="9" height="6" rx="1" fill="#e8150f" /><path d="M3.500 3l2.500 1.500L3.500 6z" fill="#fff" /></Svg></button>
      <button aria-label="Kaydet" className="ml-px flex"><Svg size={9}><circle cx="4.500" cy="4.500" r="4" fill="#e6e6e6" /><circle cx="4.500" cy="4.500" r="2" fill="#c22" /></Svg></button>
      <button aria-label="Yükle" className="ml-px flex"><Svg size={9}><rect width="9" height="9" rx="1" fill="#f4e8e8" /><path d="M4.500 7V2M3 4l1.500-2L6 4" stroke="#d66" /></Svg></button>
    </footer>
  )
}

function Callouts() {
  return (
    <svg className="pointer-events-none absolute left-0 top-0 h-[615px] w-[1024px]" viewBox="0 0 1024 615" fill="none" aria-hidden="true">
      <g stroke="#f80c0c" strokeWidth="1.500">
        <rect x="149" y="121" width="51" height="13" />
        <rect x="683" y="204" width="22" height="14" />
        <rect x="768" y="346" width="60" height="26" />
        <path d="M116 224L146 147M651 249L674 222M694 434L758 379" />
      </g>
      <path d="M149 139l1 10-7-2zM678 217l-2 8-5-4zM764 373l-4 8-5-5z" fill="#f80c0c" />
    </svg>
  )
}

export default function App() {
  return (
    <div className="relative flex h-screen flex-col overflow-hidden bg-[#fbfdfc] font-['Open_Sans','Noto_Sans',sans-serif] text-[6px] leading-[8px]">
      <Header />
      <Ribbon />
      <div className="flex min-h-0 flex-1">
        <aside className="flex w-[15px] shrink-0 flex-col items-center gap-2 border-r border-[#e6e8e8] bg-[#f6f7f7] pt-[6px] text-[#bdbdbd]">
          {small.gearGrey}
          {small.plane}
          <span className="-mt-1 whitespace-nowrap [writing-mode:vertical-rl]">Design Configurator</span>
        </aside>
        <main className="flex min-w-0 flex-1 flex-col">
          <div className="flex h-[14px] items-center gap-px border-b border-[#cfcfcf] bg-white pl-[3px]">
            <span className="flex h-[11px] w-[16px] items-center justify-center bg-[#0b6d8e]">
              <Svg size={10}><path d="M0 3.500h10M0 6.500h10" stroke="#9fd0df" /></Svg>
            </span>
            <p className="whitespace-nowrap text-[7px] text-[#222]">
              Mesafeyi ayarlamak veya bir değer girmek için tıklayın.&nbsp; K=açık nokta bulma; ardından M (Orta), E (Uç), C (Merkez), E (Silüet). Yönü kilitlemek/kilidini açmak için L&apos;ye basın.
            </p>
          </div>
          <DocumentTabs />
          <div className="flex min-h-0 flex-1">
            <PathFinder />
            <div className="relative min-w-0 flex-1 overflow-hidden">
              <Model />
              <ViewCube />
              <CommandPanel />
              <OptionsDialog />
            </div>
          </div>
        </main>
        <aside className="flex w-[14px] shrink-0 flex-col items-end gap-[9px] bg-[#f9fbfa] pt-[5px]">
          {small.asm}
          <span className="mb-[42px] -mt-2 h-[36px] whitespace-nowrap text-[#222] [writing-mode:vertical-rl]">Parça Ailesi</span>
          {small.cut}
          {small.image}
          {small.rainbow}
          {small.chain}
          {small.layers}
          {small.swatch}
          {small.chain}
        </aside>
      </div>
      <StatusBar />
      <Callouts />
    </div>
  )
}
